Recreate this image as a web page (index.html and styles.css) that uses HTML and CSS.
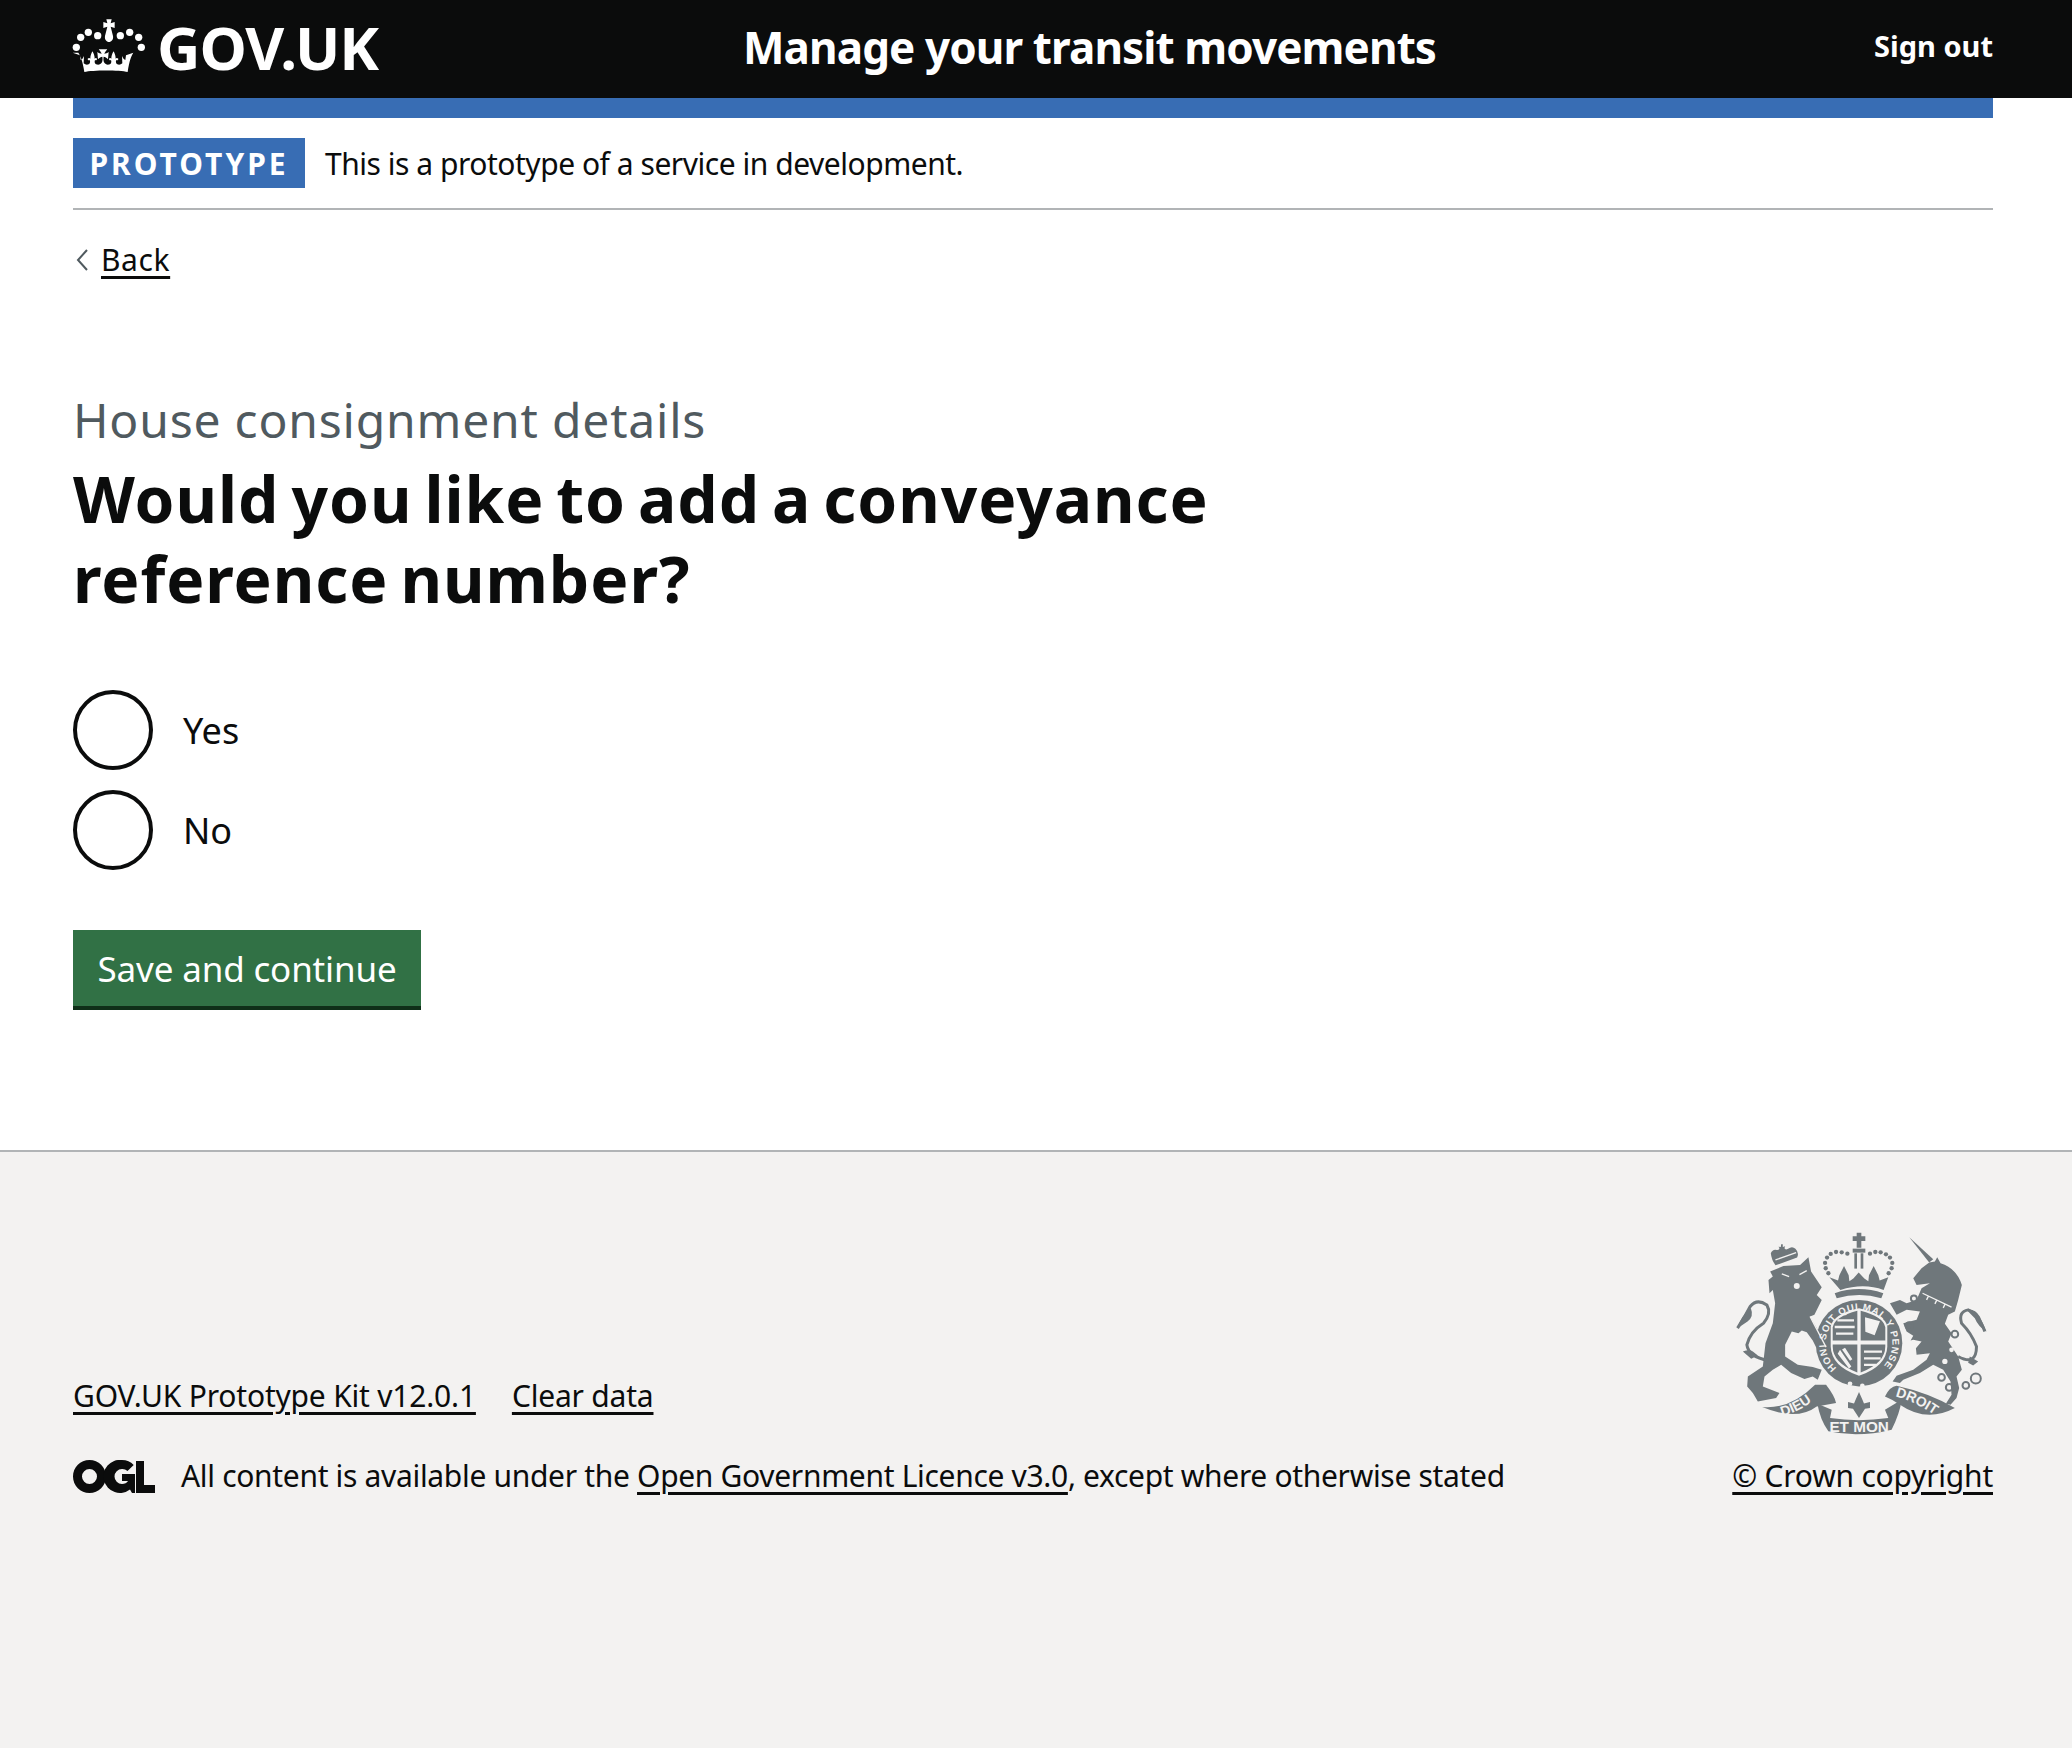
FILE: index.html
```html
<!DOCTYPE html>
<html lang="en">
<head>
<meta charset="utf-8">
<title>Manage your transit movements</title>
<link rel="stylesheet" href="styles.css">
</head>
<body>
<header class="header">
  <a class="logo" href="#">
    <svg class="crown" viewBox="0 0 330 210" aria-hidden="true">
      <g fill="#fff">
        <circle cx="62" cy="82" r="11"/><circle cx="85" cy="67" r="11"/><circle cx="113" cy="77" r="11"/>
        <circle cx="181" cy="77" r="11"/><circle cx="209" cy="67" r="11"/><circle cx="236" cy="82" r="11"/>
        <circle cx="49" cy="112" r="11"/><circle cx="244" cy="112" r="11"/>
        <path d="M139 28h16l-3 12 12-4v18l-12-4 7 28c2 11-5 18-12 18s-14-7-12-18l7-28-12 4V36l12 4z"/>
        <path d="M38 128l22 8 2 14c6-2 8-8 10-12l-1 22c4 4 10 5 15 3 5-3 5-9 3-13-3 2-6 0-6-4 3-3 7-2 8 0 0-7 2-14 6-22 5 7 7 15 7 22 2-3 5-3 7 0 0 4-3 6-6 4-2 5-1 10 3 13 7 3 14 1 18-6 2-6 2-12 1-17-4 0-9 3-13 8l-2-22c4 4 9 5 13 5-2-5-9-13-9-13h26s-7 8-9 13c4 0 9-1 13-5l-2 22c-4-5-9-8-13-8-1 5-1 11 1 17 4 7 11 9 18 6 4-3 5-8 3-13-3 2-6 0-6-4 2-3 5-3 7 0 0-7 2-15 7-22 4 8 6 15 6 22 1-2 5-3 8 0 0 4-3 6-6 4-2 4-2 10 3 13 5 2 11 1 15-3l-1-22c2 4 4 10 10 12l2-14 22-8c-6 9-12 24-17 58-24-6-106-6-130 0-5-34-12-49-18-58z"/>
      </g>
    </svg>
    <span class="logo-text">GOV.UK</span>
  </a>
  <a class="service" href="#">Manage your transit movements</a>
  <a class="signout" href="#">Sign out</a>
</header>

<div class="width">
  <div class="bluebar"></div>
  <div class="phase">
    <strong class="tag">PROTOTYPE</strong>
    <span class="phase-text">This is a prototype of a service in development.</span>
  </div>
  <a class="back" href="#">
    <svg class="chev" viewBox="0 0 14 24" aria-hidden="true"><path d="M12 2 3 12l9 10" fill="none" stroke="#505a5f" stroke-width="2"/></svg>
    <span class="back-text">Back</span>
  </a>
  <main class="main">
    <span class="caption">House consignment details</span>
    <h1 class="title">Would you like to add a conveyance reference number?</h1>
    <div class="radios">
      <label class="radio"><input class="radio-input" type="radio" name="r"><span>Yes</span></label>
      <label class="radio"><input class="radio-input" type="radio" name="r"><span>No</span></label>
    </div>
    <button class="button" type="button">Save and continue</button>
  </main>
</div>

<footer class="footer">
  <div class="width meta">
    <div class="meta-left">
      <div class="meta-links"><a href="#">GOV.UK Prototype Kit v12.0.1</a><a href="#">Clear data</a></div>
      <div class="licence">
        <svg class="ogl" viewBox="0 0 82 33" aria-hidden="true">
          <path fill="#0b0c0c" fill-rule="evenodd" d="M16.500 0C25.600 0 33 7.400 33 16.500S25.600 33 16.500 33 0 25.600 0 16.500 7.400 0 16.500 0zm0 9a7.500 7.500 0 1 0 0 15 7.500 7.500 0 0 0 0-15z"/>
          <path fill="#0b0c0c" d="M49 0c4.600 0 8.700 1.900 11.700 4.900l-6.200 6.200A7.600 7.600 0 0 0 49 9a7.500 7.500 0 0 0 0 15c2.500 0 5-1.200 6-3h-6v-7h6l7 0V33h-3l-2-3.500A16.500 16.500 0 1 1 49 0z"/>
          <path fill="#0b0c0c" d="M63 1h8v24h11v8H63z"/>
        </svg>
        <span class="licence-text">All content is available under the <a href="#">Open Government Licence v3.0</a>, except where otherwise stated</span>
      </div>
    </div>
    <div class="meta-right">
      <svg class="crest" viewBox="105 90 765 625" aria-hidden="true">
        <defs>
          <path id="garter" d="M410 505A100 100 0 1 1 544 505"/>
          <path id="scrollL" d="M246 650Q310 632 362 584"/>
          <path id="scrollR" d="M586 590Q650 606 718 656"/>
        </defs>
        <g fill="#6f777b">
          <!-- royal crown -->
          <path d="M470 98h14v11h12v14h-12v20h-14v-20h-12v-14h12z"/>
          <rect x="463" y="160" width="8" height="46"/><rect x="482" y="160" width="8" height="46"/>
          <rect x="458" y="146" width="38" height="12"/>
          <g>
            <circle cx="392" cy="162" r="6.500"/><circle cx="408" cy="156" r="6.500"/><circle cx="425" cy="157" r="6.500"/><circle cx="442" cy="161" r="6.500"/><circle cx="381" cy="173" r="6.500"/><circle cx="375" cy="189" r="6.500"/><circle cx="377" cy="205" r="6.500"/><circle cx="385" cy="220" r="6.500"/>
            <circle cx="510" cy="161" r="6.500"/><circle cx="526" cy="156" r="6.500"/><circle cx="542" cy="157" r="6.500"/><circle cx="558" cy="163" r="6.500"/><circle cx="570" cy="173" r="6.500"/><circle cx="577" cy="189" r="6.500"/><circle cx="575" cy="205" r="6.500"/><circle cx="566" cy="220" r="6.500"/>
          </g>
          <path d="M388 232l26 10 4-16 14-28 14 28 2 18 12-8 16-18 17 18 12 8 2-18 14-28 14 28 4 16 26-10-14 38q-60-22-130 0z"/>
          <path d="M404 280q72-25 146 0l-6 15q-66-20-134 0z"/>
          <!-- lion's crown -->
          <path d="M212 160q5-13 18-10 8 1 8-6l-3-4 7 1 1-8 5 0 0 8 7-2-2 6q3 6 11 1 12-9 22 0 12 12 5 27l-65 23q-12-16-14-36z"/>
          <!-- lion -->
          <path d="M210 215l40-17 50-3 25-23 8 43 32 47-15 23 15 15-22 45-13 5 22 38 18 22 8 28-15 12-15-8-10-20-18-25-15-5-10 8-20-5-20 40v35l38 25 45 7 27 8-12 30-15-10-25 8-40-18-30-25-25 15-25 20-5 30 50 20-10 15-55 10-15-25-17-20 2-30 45-30 8-70 22-60 7-60-7-40-10 10-3-40 13-10z"/>
          <path d="M205 482Q145 472 140 435 150 395 190 370 215 340 200 315 170 295 150 320 135 350 112 385" fill="none" stroke="#6f777b" stroke-width="9"/>
          <path d="M112 385q8-35 40-60 10 25-10 40zM128 455q20-8 30 0l15 12-20 10z"/>
          <!-- unicorn -->
          <path d="M628 112l72 66-12 10z"/>
          <path d="M688 188L705 185 712 172 722 190Q770 205 786 255L775 300 765 335 745 345 735 372 755 400 745 425 775 470 786 510 770 530 778 565 770 595 752 615 738 612 755 585 752 545 730 510 700 495 660 520 610 540 600 550 578 545 590 528 640 510 680 480 690 460 650 465 648 445 665 425 640 420 632 422 640 408 620 395 610 370 650 360 660 335 620 330 590 345 570 310 600 300 620 310 650 300 665 265 690 250 650 255 640 235 665 205z"/>
          <path d="M775 470Q830 500 830 440 815 400 785 370 775 335 805 330 835 340 855 395" fill="none" stroke="#6f777b" stroke-width="9"/>
          <path d="M800 330q25-5 40 20l20 45q-25-15-35-40zM810 470l25 15-15 12-15-8z"/>
          <!-- shield and garter -->
          <circle cx="477" cy="430" r="130"/>
          <path fill="#f3f2f1" d="M392 380Q400 342 477 325 554 342 562 380V440Q560 500 477 528 394 500 392 440z"/>
          <path d="M398 382Q405 350 472 333V422H398zM482 333Q549 350 556 382V422H482zM398 434H472V518Q398 490 398 440zM482 434H556V440Q556 490 482 518z"/>
          <path fill="#f3f2f1" d="M412 358h50v7h-50zM404 378h60v7h-60zM408 398h52v7h-52zM495 352l45 12-16 42-28-10zM492 452h54v7h-54zM492 472h50v7h-50zM492 492h36v7h-36zM420 450l34 50-7 6-34-44zM435 444l22 34-7 5-24-34z"/>
          <circle cx="450" cy="552" r="7" fill="#f3f2f1"/><circle cx="487" cy="558" r="7" fill="#f3f2f1"/>
          <!-- fleur -->
          <path d="M477 577l10 22 5 12 18-4 0 18-15 2-18 28-18-28-15-2 0-18 18 4 5-12z"/>
          <!-- scrolls -->
          <path d="M186 622Q270 630 345 555L378 555Q405 590 408 610L350 620Q290 665 186 622z"/>
          <path d="M352 612L395 630 390 655Q475 668 565 655L555 630 605 600Q600 640 575 690 475 715 385 695 360 660 352 612z"/>
          <path d="M555 590Q570 560 590 558 690 580 765 625 680 670 600 615 580 600 555 590z"/>
          <g fill="none" stroke="#6f777b" stroke-width="6">
            <circle cx="642" cy="296" r="9"/><circle cx="628" cy="378" r="11"/><circle cx="765" cy="403" r="10"/><circle cx="725" cy="533" r="10"/><circle cx="748" cy="563" r="10"/><circle cx="798" cy="557" r="10"/><circle cx="828" cy="536" r="15"/>
          </g>
        </g>
        <g fill="none" stroke="#f3f2f1" stroke-width="4">
          <path d="M330 350L378 442"/>
          <path d="M245 222l22 8M320 212l-22 12"/>
          <path d="M668 280L755 322M680 300l6-12M705 312l6-12M730 324l6-12"/>
          <path d="M226 180l62-22"/>
        </g>
        <g fill="#f3f2f1">
          <circle cx="735" cy="485" r="8"/><circle cx="755" cy="450" r="7"/><circle cx="290" cy="258" r="9"/>
          <text class="crest-text garter-text"><textPath href="#garter" textLength="470" lengthAdjust="spacing">HONI SOIT QUI MAL Y PENSE</textPath></text>
          <text class="crest-text scroll-text"><textPath href="#scrollL">DIEU</textPath></text>
          <text class="crest-text" x="388" y="697">ET MON</text>
          <text class="crest-text scroll-text"><textPath href="#scrollR">DROIT</textPath></text>
        </g>
      </svg>
      <a class="copyright" href="#">© Crown copyright</a>
    </div>
  </div>
</footer>
</body>
</html>
```
FILE: styles.css
```css
* { box-sizing: border-box; }
html, body { margin: 0; padding: 0; }
body {
  min-height: 1748px;
  display: flex;
  flex-direction: column;
  font-family: "Noto Sans", "Liberation Sans", sans-serif;
  color: #0b0c0c;
  background: #fff;
}
a { color: #0b0c0c; }

.header {
  height: 98px;
  background: #0b0c0c;
  padding: 0 79px 5px 73px;
  display: flex;
  align-items: center;
}
.header a { color: #fff; text-decoration: none; }
.logo {
  flex: 0 0 670px;
  display: flex;
  align-items: center;
}
.crown { width: 110px; height: 70px; margin: -3px -13px 0 -13px; flex: none; }
.logo-text { font-size: 60px; font-weight: 700; letter-spacing: -1px; line-height: 1; }
.service { font-size: 44px; font-weight: 700; letter-spacing: -0.9px; line-height: 1; }
.signout { margin-left: auto; margin-bottom: 2px; font-size: 29px; font-weight: 700; line-height: 1; }

.width { margin: 0 79px 0 73px; }
.bluebar { height: 20px; background: #386db4; }
.phase {
  height: 92px;
  padding-top: 20px;
  border-bottom: 2px solid #b1b4b6;
  display: flex;
  align-items: flex-start;
  gap: 20px;
  font-size: 30px;
  line-height: 50px;
}
.phase-text { letter-spacing: -0.47px; line-height: 52px; }
.tag {
  width: 232px;
  height: 50px;
  background: #386db4;
  color: #fff;
  font-size: 30px;
  font-weight: 700;
  letter-spacing: 3px;
  line-height: 52px;
  text-align: center;
}
.back {
  display: inline-flex;
  align-items: center;
  gap: 12px;
  margin-top: 31px;
  font-size: 30px;
  line-height: 38px;
  letter-spacing: 0.6px;
  text-decoration: none;
}
.chev { width: 14px; height: 24px; flex: none; margin-left: 2px; }
.back-text { text-decoration: underline; text-underline-offset: 5px; }

.main { padding-top: 116px; }
.caption { display: block; color: #505a5f; font-size: 48px; line-height: 50px; letter-spacing: 0.8px; }
.title {
  width: 1200px;
  margin: 14px 0 0;
  font-size: 64px;
  line-height: 80px;
  font-weight: 700;
  letter-spacing: 0.95px;
  word-spacing: -5.6px;
}
.radios { margin-top: 71px; display: flex; flex-direction: column; gap: 20px; }
.radio { display: flex; align-items: center; gap: 30px; height: 80px; font-size: 36px; }
.radio-input {
  appearance: none;
  width: 80px;
  height: 80px;
  margin: 0;
  border: 4px solid #0b0c0c;
  border-radius: 50%;
  background: #fff;
}
.button {
  display: block;
  width: 348px;
  height: 80px;
  margin-top: 60px;
  padding: 0;
  border: 0;
  border-bottom: 4px solid #0f2f18;
  background: #317145;
  color: #fff;
  font-family: inherit;
  font-size: 35px;
  letter-spacing: -0.15px;
}

.footer {
  flex: 1;
  margin-top: 140px;
  border-top: 2px solid #b1b4b6;
  background: #f3f2f1;
  padding-top: 78px;
}
.meta { display: flex; justify-content: space-between; align-items: flex-end; }
.meta-links { display: flex; gap: 36px; font-size: 30px; line-height: 40px; letter-spacing: -0.2px; }
.meta-links a, .licence a, .copyright { text-underline-offset: 5px; }
.licence { display: flex; align-items: center; gap: 26px; margin-top: 40px; font-size: 30px; line-height: 40px; letter-spacing: -0.32px; }
.ogl { width: 82px; height: 33px; flex: none; }
.meta-right { display: flex; flex-direction: column; align-items: flex-end; }
.crest { width: 255px; height: 208px; margin: 0 3px 18px 0; display: block; }
.copyright { font-size: 30px; line-height: 40px; letter-spacing: -0.23px; }
.crest-text { font-family: "Liberation Sans", sans-serif; font-weight: 700; font-size: 46px; }
.garter-text { font-size: 29px; }
.scroll-text { font-size: 42px; }
```
